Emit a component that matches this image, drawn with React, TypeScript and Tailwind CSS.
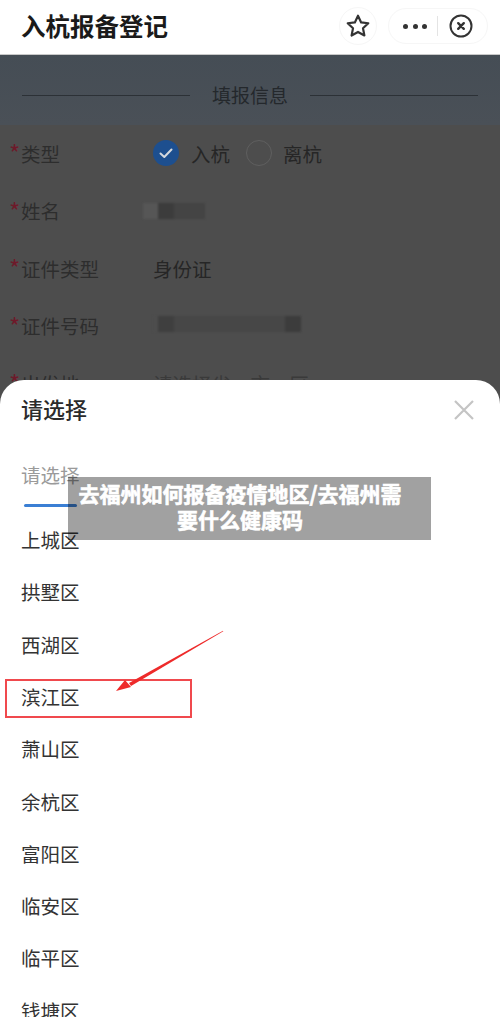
import React from 'react';

const DISTRICTS = ['上城区', '拱墅区', '西湖区', '滨江区', '萧山区', '余杭区', '富阳区', '临安区', '临平区', '钱塘区'];
const font = { fontFamily: '"Noto Sans CJK SC", "Liberation Sans", sans-serif' };

function FormRow({ label, children }: { label: string; children?: React.ReactNode }) {
  return (
    <div className="h-[57.5px] flex items-center text-[19.5px] text-[#262626]">
      <div className="w-[153px] flex items-center pl-[9px] text-[#2d2d2d]">
        <span className="w-3 text-[#6e1a2a] text-[24px] leading-none">*</span>
        <span>{label}</span>
      </div>
      {children}
    </div>
  );
}

function Redacted({ widths }: { widths: [number, string][] }) {
  return (
    <div className="flex h-[16px] blur-[1px]">
      {widths.map(([w, c], i) => (
        <div key={i} className="h-full" style={{ width: w, background: c }} />
      ))}
    </div>
  );
}

export default function App() {
  return (
    <div className="relative w-[500px] h-[1017px] overflow-hidden bg-[#4d4d4d]" style={font}>
      <header className="h-[55px] bg-white border-b border-[#c9c9c9] flex items-center pl-[21px] pr-[12px] pb-[2px]">
        <h1 className="flex-1 text-[24.5px] font-bold text-[#1a1a1a]">入杭报备登记</h1>
        <div className="w-[38px] h-[38px] rounded-full border border-[#f6f6f6] flex items-center justify-center mr-[11px]">
          <svg width="26" height="26" viewBox="0 0 24 24" fill="none" stroke="#333" strokeWidth="2" strokeLinejoin="round">
            <path d="M12 2.5l2.9 6.2 6.6.8-4.9 4.6 1.3 6.7L12 17.5l-5.9 3.3 1.3-6.7L2.5 9.5l6.6-.8z" />
          </svg>
        </div>
        <div className="w-[100px] h-[36px] rounded-full border border-[#f6f6f6] flex items-center">
          <div className="flex gap-[4.5px] ml-[14px]">
            <span className="w-[5px] h-[5px] rounded-full bg-[#333]" />
            <span className="w-[5px] h-[5px] rounded-full bg-[#333]" />
            <span className="w-[5px] h-[5px] rounded-full bg-[#333]" />
          </div>
          <div className="w-px h-[20px] bg-[#e4e4e4] ml-[10px]" />
          <svg className="ml-[11px]" width="24" height="24" viewBox="0 0 24 24" fill="none" stroke="#333" strokeWidth="2" strokeLinecap="round">
            <circle cx="12" cy="12" r="10.5" />
            <path strokeWidth="2.4" d="M9.2 9.2l5.6 5.6M14.8 9.2l-5.6 5.6" />
          </svg>
        </div>
      </header>

      <div className="h-[70px] pt-[10px] bg-gradient-to-b from-[#454d55] to-[#4a5057] flex items-center px-[22px] gap-[22px]">
        <div className="flex-1 h-px bg-[#2c3136]" />
        <span className="text-[19px] text-[#24282c]">填报信息</span>
        <div className="flex-1 h-px bg-[#2c3136]" />
      </div>

      <div className="-mt-[0.5px]">
        <FormRow label="类型">
          <div className="flex items-center">
            <span className="w-[26px] h-[26px] rounded-full bg-[#1d4f8f] flex items-center justify-center">
              <svg width="18" height="18" viewBox="0 0 18 18" fill="none" stroke="#d5d9de" strokeWidth="2" strokeLinecap="round" strokeLinejoin="round">
                <path d="M3.5 9.5l3.8 3.5 7.2-7.5" />
              </svg>
            </span>
            <span className="ml-[12px]">入杭</span>
            <span className="ml-[16px] w-[26px] h-[26px] rounded-full border border-[#5f5f5f]" />
            <span className="ml-[11px]">离杭</span>
          </div>
        </FormRow>
        <FormRow label="姓名">
          <div className="-ml-[10px]">
            <Redacted widths={[[15, '#565656'], [16, '#3c3c3c'], [31, '#444444']]} />
          </div>
        </FormRow>
        <FormRow label="证件类型">
          <span>身份证</span>
        </FormRow>
        <FormRow label="证件号码">
          <div className="-mt-[4px]">
            <Redacted widths={[[5, '#4d4d4d'], [16, '#3f3f3f'], [111, '#474747'], [16, '#3c3c3c']]} />
          </div>
        </FormRow>
        <FormRow label="出发地">
          <span className="text-[#3a3a3a]">请选择省、市、区</span>
        </FormRow>
      </div>

      <div className="absolute left-0 right-0 top-[380px] bottom-0 bg-white rounded-t-[24px] px-[21px]">
        <div className="flex items-center justify-between h-[62px] pb-[2px]">
          <span className="text-[22px] font-medium text-[#2b2b2b] -mt-[3px]">请选择</span>
          <svg className="mr-[3px]" width="24" height="24" viewBox="0 0 24 24" fill="none" stroke="#c4c4c4" strokeWidth="2.2">
            <path d="M3 3l18 18M21 3L3 21" />
          </svg>
        </div>
        <div className="w-[60px] h-[54px] mt-[19px] flex flex-col">
          <span className="text-[19.5px] text-[#9a9a9a] leading-[28px] whitespace-nowrap">请选择</span>
          <span className="mt-[15px] ml-[3px] w-[53px] h-[3px] rounded-full bg-[#3b7fd4]" />
        </div>
        <ul className="-mt-[1.5px]">
          {DISTRICTS.map((d) => (
            <li key={d} className="h-[52.3px] flex items-center text-[19.5px] text-[#333]">{d}</li>
          ))}
        </ul>
      </div>

      <div className="absolute left-[5px] top-[679px] w-[187px] h-[39px] border-2 border-solid border-[#f0494d]" />
      <svg className="absolute left-[110px] top-[626px]" width="118" height="70" viewBox="0 0 118 70" fill="none">
        <path d="M113 4.7L113.3 5.3L21 60L19 57Z" fill="#ee2a2a" />
        <path d="M6 65L15 54l6 7z" fill="#ee2a2a" />
      </svg>

      <div className="absolute left-[68px] top-[477px] w-[363px] h-[63px] bg-black/37 flex items-center">
        <p className="ml-[7px] w-[330px] text-center text-white font-bold text-[21px] leading-[26px] pb-[6px] [-webkit-text-stroke:0.6px_white]">
          去福州如何报备疫情地区/去福州需要什么健康码
        </p>
      </div>
    </div>
  );
}
